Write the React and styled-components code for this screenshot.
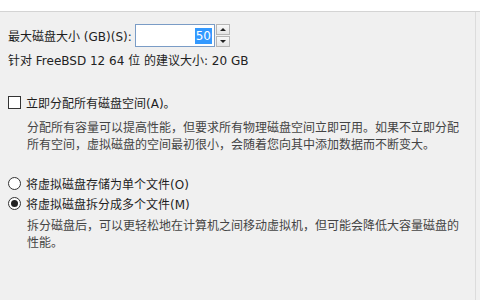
import React from 'react'
import styled, { createGlobalStyle } from 'styled-components'

const GlobalStyle = createGlobalStyle`
  html, body {
    margin: 0;
    padding: 0;
    background: #f0f0f0;
  }
  body {
    font-family: "DejaVu Sans", "Noto Sans CJK SC", sans-serif;
  }
`

const Page = styled.div`
  width: 480px;
  height: 300px;
  overflow: hidden;
  display: flex;
  flex-direction: column;
  background: #f0f0f0;
`

const TopBand = styled.div`
  height: 11px;
  background: #ffffff;
  border-bottom: 1px solid #d4d4d4;
  flex-shrink: 0;
`

const Body = styled.div`
  flex: 1;
  display: flex;
  flex-direction: column;
  padding: 12px 0 0 8px;
  border-right: 1px solid #dcdcdc;
  margin-right: 4px;
  color: #1e1e1e;
  font-size: 12px;
`

const SizeRow = styled.div`
  display: flex;
  align-items: center;
  height: 23px;
`

const Label = styled.span`
  width: 127px;
  white-space: nowrap;
`

const Input = styled.div`
  width: 76px;
  height: 21px;
  background: #fff;
  border: 1px solid #7a9cc6;
  display: flex;
  align-items: center;
  justify-content: flex-end;
  padding-right: 2px;
  box-sizing: content-box;
`

const Selected = styled.span`
  background: #3399ff;
  color: #fff;
  font-size: 12px;
  line-height: 16px;
  padding: 0 1px;
`

const Spinner = styled.div`
  display: flex;
  flex-direction: column;
  margin-left: 1px;
  height: 23px;
`

const SpinButton = styled.div`
  width: 14px;
  height: 11px;
  background: linear-gradient(#f8f8f8, #e4e4e4);
  border: 1px solid #b5b5b5;
  box-sizing: border-box;
  display: flex;
  align-items: center;
  justify-content: center;
  & + & {
    margin-top: 1px;
  }
`

const Arrow = styled.div`
  width: 0;
  height: 0;
  border-left: 3px solid transparent;
  border-right: 3px solid transparent;
  ${p => (p.$up ? 'border-bottom: 3px solid #222;' : 'border-top: 3px solid #222;')}
`

const Hint = styled.div`
  margin-top: 5px;
  height: 18px;
  line-height: 18px;
  color: #222;
`

const Option = styled.div`
  display: flex;
  align-items: center;
  height: 20px;
  margin-top: ${p => p.$gap || 0}px;
  white-space: nowrap;
`

const Box = styled.div`
  width: 13px;
  height: 13px;
  box-sizing: border-box;
  border: 1px solid #333;
  background: #fff;
  margin-right: 5px;
  flex-shrink: 0;
`

const Radio = styled.div`
  width: 13px;
  height: 13px;
  box-sizing: border-box;
  border: 1px solid #333;
  border-radius: 50%;
  background: #fff;
  margin-right: 5px;
  flex-shrink: 0;
  display: flex;
  align-items: center;
  justify-content: center;
  &::after {
    content: '';
    display: ${p => (p.$checked ? 'block' : 'none')};
    width: 7px;
    height: 7px;
    border-radius: 50%;
    background: #222;
  }
`

const Desc = styled.div`
  margin-left: 19px;
  margin-top: ${p => p.$top}px;
  line-height: 17px;
  color: #444;
  white-space: nowrap;
`

export default function App() {
  return (
    <>
      <GlobalStyle />
      <Page>
        <TopBand />
        <Body>
          <SizeRow>
            <Label>最大磁盘大小 (GB)(S):</Label>
            <Input>
              <Selected>50</Selected>
            </Input>
            <Spinner>
              <SpinButton>
                <Arrow $up />
              </SpinButton>
              <SpinButton>
                <Arrow />
              </SpinButton>
            </Spinner>
          </SizeRow>
          <Hint>针对 FreeBSD 12 64 位 的建议大小: 20 GB</Hint>
          <Option $gap={22}>
            <Box />
            <span>立即分配所有磁盘空间(A)。</span>
          </Option>
          <Desc $top={8}>
            分配所有容量可以提高性能，但要求所有物理磁盘空间立即可用。如果不立即分配
            <br />
            所有空间，虚拟磁盘的空间最初很小，会随着您向其中添加数据而不断变大。
          </Desc>
          <Option $gap={19}>
            <Radio />
            <span>将虚拟磁盘存储为单个文件(O)</span>
          </Option>
          <Option>
            <Radio $checked />
            <span>将虚拟磁盘拆分成多个文件(M)</span>
          </Option>
          <Desc $top={5}>
            拆分磁盘后，可以更轻松地在计算机之间移动虚拟机，但可能会降低大容量磁盘的
            <br />
            性能。
          </Desc>
        </Body>
      </Page>
    </>
  )
}
